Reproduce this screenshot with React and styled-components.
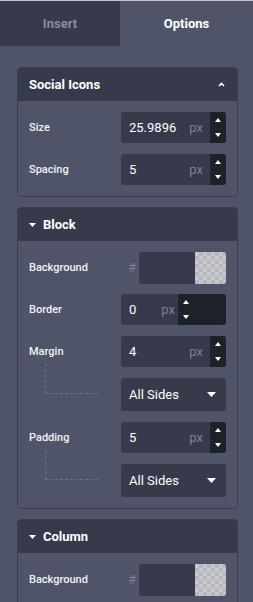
import React from "react";
import styled, { createGlobalStyle } from "styled-components";

const GlobalStyle = createGlobalStyle`
  html, body {
    margin: 0;
    padding: 0;
    background: #4f5468;
    font-family: Roboto, "Liberation Sans", sans-serif;
  }
`;

const Sidebar = styled.div`
  width: 253px;
  min-height: 100vh;
  background: #4f5468;
  border-top: 1px solid #c3c7d2;
  box-sizing: border-box;
`;

const Tabs = styled.div`
  display: grid;
  grid-template-columns: 120px 1fr;
  height: 45px;
`;

const Tab = styled.div`
  display: flex;
  align-items: center;
  justify-content: center;
  background: ${({ $active }) => ($active ? "#4f5468" : "#363a4b")};
  color: ${({ $active }) => ($active ? "#ffffff" : "#868ba0")};
  font-size: 13px;
  font-weight: 700;
`;

const Content = styled.div`
  display: flex;
  flex-direction: column;
  gap: 10px;
  padding: 21px 15px 0 17px;
`;

const Panel = styled.section`
  border: 1px solid #393d4e;
  border-radius: 4px;
  overflow: hidden;
`;

const PanelHeader = styled.div`
  display: flex;
  align-items: center;
  gap: 7px;
  height: 33px;
  padding: 0 12px 0 11px;
  background: #363a4b;
  color: #ffffff;
  font-size: 13px;
  font-weight: 700;
`;

const HeaderTitle = styled.span`
  flex: 1;
`;

const PanelBody = styled.div`
  display: flex;
  flex-direction: column;
  gap: 11px;
  padding: 11px;
`;

const Row = styled.div`
  display: flex;
  align-items: center;
  justify-content: space-between;
  height: ${({ $tall }) => ($tall ? "33px" : "31px")};
`;

const Label = styled.span`
  color: #f1f3f7;
  font-size: 11px;
  font-weight: 500;
`;

const Connector = styled.div`
  align-self: flex-start;
  margin: -14px 0 0 16px;
  width: 53px;
  height: 30px;
  border-left: 1px dashed #6d7285;
  border-bottom: 1px dashed #6d7285;
  box-sizing: border-box;
`;

const NumberBox = styled.div`
  display: flex;
  width: 105px;
  height: 31px;
  background: #363a4b;
  border-radius: 3px;
  overflow: hidden;
`;

const NumberValue = styled.span`
  flex: 1;
  display: flex;
  align-items: center;
  padding-left: 8px;
  color: #ffffff;
  font-size: 13px;
`;

const Unit = styled.span`
  display: flex;
  align-items: center;
  padding-right: ${({ $wide }) => ($wide ? "3px" : "7px")};
  color: #7c819b;
  font-size: 13px;
`;

const Stepper = styled.div`
  width: ${({ $wide }) => ($wide ? "48px" : "16px")};
  background: #1f2128;
  display: flex;
`;

const Arrows = styled.div`
  width: 16px;
  display: flex;
  flex-direction: column;
  align-items: center;
  justify-content: space-between;
  padding: 6px 0;
  box-sizing: border-box;
`;

const SelectBox = styled.div`
  display: flex;
  align-items: center;
  justify-content: space-between;
  width: 105px;
  height: 33px;
  padding: 0 10px 0 8px;
  box-sizing: border-box;
  background: #363a4b;
  border-radius: 3px;
  color: #ffffff;
  font-size: 13px;
`;

const ColorField = styled.div`
  display: flex;
  align-items: center;
  gap: 3px;
`;

const Hash = styled.span`
  color: #7c819b;
  font-size: 13px;
`;

const Swatch = styled.div`
  display: flex;
  width: 87px;
  height: 32px;
  border-radius: 3px;
  overflow: hidden;
  background: #363a4b;
`;

const Checker = styled.div`
  margin-left: auto;
  width: 31px;
  height: 100%;
  background-color: #c7c8cc;
  background-image: linear-gradient(45deg, #b5b7bc 25%, transparent 25%),
    linear-gradient(-45deg, #b5b7bc 25%, transparent 25%),
    linear-gradient(45deg, transparent 75%, #b5b7bc 75%),
    linear-gradient(-45deg, transparent 75%, #b5b7bc 75%);
  background-size: 8px 8px;
  background-position: 0 0, 0 4px, 4px -4px, -4px 0;
`;

const Triangle = ({ up, w = 7, h = 4 }) => (
  <svg width={w} height={h} viewBox={`0 0 ${w} ${h}`}>
    <polygon
      points={up ? `0,${h} ${w / 2},0 ${w},${h}` : `0,0 ${w},0 ${w / 2},${h}`}
      fill="#ffffff"
    />
  </svg>
);

const Caret = () => (
  <svg width="7" height="5" viewBox="0 0 7 5">
    <polyline points="1,4 3.5,1.5 6,4" fill="none" stroke="#ffffff" strokeWidth="1.6" />
  </svg>
);

const NumberInput = ({ value, wide }) => (
  <NumberBox>
    <NumberValue>{value}</NumberValue>
    <Unit $wide={wide}>px</Unit>
    <Stepper $wide={wide}>
      <Arrows>
        <Triangle up w={6} h={4} />
        <Triangle w={6} h={4} />
      </Arrows>
    </Stepper>
  </NumberBox>
);

const Select = ({ value }) => (
  <SelectBox>
    {value}
    <Triangle w={9} h={5} />
  </SelectBox>
);

const ColorInput = () => (
  <ColorField>
    <Hash>#</Hash>
    <Swatch>
      <Checker />
    </Swatch>
  </ColorField>
);

const App = () => (
  <>
    <GlobalStyle />
    <Sidebar>
      <Tabs>
        <Tab>Insert</Tab>
        <Tab $active>Options</Tab>
      </Tabs>
      <Content>
        <Panel>
          <PanelHeader>
            <HeaderTitle>Social Icons</HeaderTitle>
            <Caret />
          </PanelHeader>
          <PanelBody>
            <Row>
              <Label>Size</Label>
              <NumberInput value="25.9896" />
            </Row>
            <Row>
              <Label>Spacing</Label>
              <NumberInput value="5" />
            </Row>
          </PanelBody>
        </Panel>

        <Panel>
          <PanelHeader>
            <Triangle w={7} h={4} />
            <HeaderTitle>Block</HeaderTitle>
          </PanelHeader>
          <PanelBody>
            <Row>
              <Label>Background</Label>
              <ColorInput />
            </Row>
            <Row>
              <Label>Border</Label>
              <NumberInput value="0" wide />
            </Row>
            <Row>
              <Label>Margin</Label>
              <NumberInput value="4" />
            </Row>
            <Row $tall>
              <Connector />
              <Select value="All Sides" />
            </Row>
            <Row>
              <Label>Padding</Label>
              <NumberInput value="5" />
            </Row>
            <Row $tall>
              <Connector />
              <Select value="All Sides" />
            </Row>
          </PanelBody>
        </Panel>

        <Panel>
          <PanelHeader>
            <Triangle w={7} h={4} />
            <HeaderTitle>Column</HeaderTitle>
          </PanelHeader>
          <PanelBody>
            <Row>
              <Label>Background</Label>
              <ColorInput />
            </Row>
          </PanelBody>
        </Panel>
      </Content>
    </Sidebar>
  </>
);

export default App;
